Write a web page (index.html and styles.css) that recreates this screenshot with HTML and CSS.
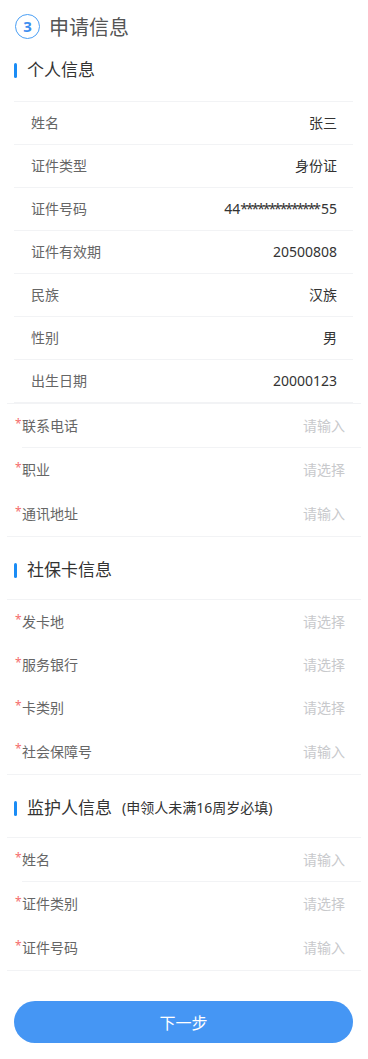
FILE: index.html
```html
<!DOCTYPE html>
<html lang="zh-CN">
<head>
    <meta charset="UTF-8">
    <meta name="viewport" content="width=device-width, initial-scale=1.0">
    <title>申请信息</title>
    <link rel="stylesheet" href="styles.css">
</head>
<body>

    <div class="page">

        <!-- Step header -->
        <div class="step-header">
            <span class="step-num">3</span>
            <span class="step-title">申请信息</span>
        </div>

        <!-- Personal info (read only) -->
        <div class="section-title"><span class="bar"></span>个人信息</div>
        <div class="info-list">
            <div class="info-row"><span class="info-label">姓名</span><span class="info-value">张三</span></div>
            <div class="info-row"><span class="info-label">证件类型</span><span class="info-value">身份证</span></div>
            <div class="info-row"><span class="info-label">证件号码</span><span class="info-value">44<span class="mask">**************</span>55</span></div>
            <div class="info-row"><span class="info-label">证件有效期</span><span class="info-value">20500808</span></div>
            <div class="info-row"><span class="info-label">民族</span><span class="info-value">汉族</span></div>
            <div class="info-row"><span class="info-label">性别</span><span class="info-value">男</span></div>
            <div class="info-row"><span class="info-label">出生日期</span><span class="info-value">20000123</span></div>
        </div>

        <div class="form-group">
            <div class="form-row line"><span class="req">*</span><div class="row-main"><span class="form-label">联系电话</span><span class="placeholder">请输入</span></div></div>
            <div class="form-row"><span class="req">*</span><div class="row-main"><span class="form-label">职业</span><span class="placeholder">请选择</span></div></div>
            <div class="form-row"><span class="req">*</span><div class="row-main"><span class="form-label">通讯地址</span><span class="placeholder">请输入</span></div></div>
        </div>

        <!-- Social security card -->
        <div class="section-title"><span class="bar"></span>社保卡信息</div>
        <div class="form-group compact">
            <div class="form-row"><span class="req">*</span><div class="row-main"><span class="form-label">发卡地</span><span class="placeholder">请选择</span></div></div>
            <div class="form-row"><span class="req">*</span><div class="row-main"><span class="form-label">服务银行</span><span class="placeholder">请选择</span></div></div>
            <div class="form-row"><span class="req">*</span><div class="row-main"><span class="form-label">卡类别</span><span class="placeholder">请选择</span></div></div>
            <div class="form-row tall"><span class="req">*</span><div class="row-main"><span class="form-label">社会保障号</span><span class="placeholder">请输入</span></div></div>
        </div>

        <!-- Guardian -->
        <div class="section-title"><span class="bar"></span>监护人信息<span class="hint">(申领人未满16周岁必填)</span></div>
        <div class="form-group">
            <div class="form-row line"><span class="req">*</span><div class="row-main"><span class="form-label">姓名</span><span class="placeholder">请输入</span></div></div>
            <div class="form-row"><span class="req">*</span><div class="row-main"><span class="form-label">证件类别</span><span class="placeholder">请选择</span></div></div>
            <div class="form-row"><span class="req">*</span><div class="row-main"><span class="form-label">证件号码</span><span class="placeholder">请输入</span></div></div>
        </div>

        <button class="next-button">下一步</button>
    </div>

</body>
</html>
```

FILE: styles.css
```css
body {
    font-family: "Noto Sans", "Noto Sans CJK SC", sans-serif;
    background-color: #fff;
    margin: 0;
    padding: 0;
}

.page {
    padding: 0 7px;
}

/* Step header */
.step-header {
    display: flex;
    align-items: flex-start;
    height: 40px;
    padding: 14px 0 0 8px;
    box-sizing: border-box;
}

.step-num {
    width: 25px;
    height: 25px;
    box-sizing: border-box;
    border: 1.5px solid #4a9ff5;
    border-radius: 50%;
    color: #3d8ef0;
    font-size: 15px;
    font-weight: bold;
    display: flex;
    align-items: center;
    justify-content: center;
    line-height: 1;
}

.step-title {
    margin-left: 9px;
    font-size: 20px;
    line-height: 25px;
    color: #555;
    margin-top: 1px;
}

/* Section titles */
.section-title {
    display: flex;
    align-items: center;
    padding: 21px 0 17px 7px;
    font-size: 17px;
    line-height: 24px;
    color: #333;
}

.step-header + .section-title {
    padding: 18px 0 19px 7px;
}

.section-title .bar {
    width: 3px;
    height: 15px;
    background-color: #1a8cf5;
    border-radius: 2px;
    margin-right: 10px;
}

.section-title .hint {
    font-size: 14px;
    margin-left: 10px;
}

/* Read only info */
.info-list {
    margin: 0 8px 0 7px;
}

.info-row {
    display: flex;
    justify-content: space-between;
    align-items: center;
    height: 43px;
    box-sizing: border-box;
    padding: 0 16px 2px 17px;
    border-top: 1px solid #f2f3f5;
    font-size: 14px;
}

.info-row:last-child {
    border-bottom: 1px solid #f2f3f5;
    height: 44px;
}

.info-label {
    color: #666;
}

.info-value {
    color: #333;
}

.mask {
    letter-spacing: -2.1px;
    margin-right: 2px;
}

/* Form rows */
.form-group {
    border-top: 1px solid #f2f3f5;
    border-bottom: 1px solid #f2f3f5;
}

.form-row {
    display: flex;
    height: 44px;
    padding-left: 8px;
    font-size: 14px;
}

.compact .form-row {
    height: 43px;
}

.compact .form-row.tall {
    height: 45px;
}

.req {
    width: 7px;
    color: #f56c6c;
    font-size: 12px;
    line-height: 1;
    padding-top: 14px;
}

.row-main {
    flex: 1;
    display: flex;
    justify-content: space-between;
    align-items: center;
    padding: 0 16px 2px 0;
}

.form-row.line .row-main {
    border-bottom: 1px solid #f2f3f5;
}

.form-label {
    color: #666;
}

.placeholder {
    color: #c8c9cc;
}

/* Bottom button */
.next-button {
    display: block;
    width: 339px;
    height: 42px;
    margin: 30px 0 0 7px;
    border: none;
    border-radius: 21px;
    background-color: #4596f4;
    color: #fff;
    font-family: inherit;
    font-size: 16px;
    cursor: pointer;
}
```
